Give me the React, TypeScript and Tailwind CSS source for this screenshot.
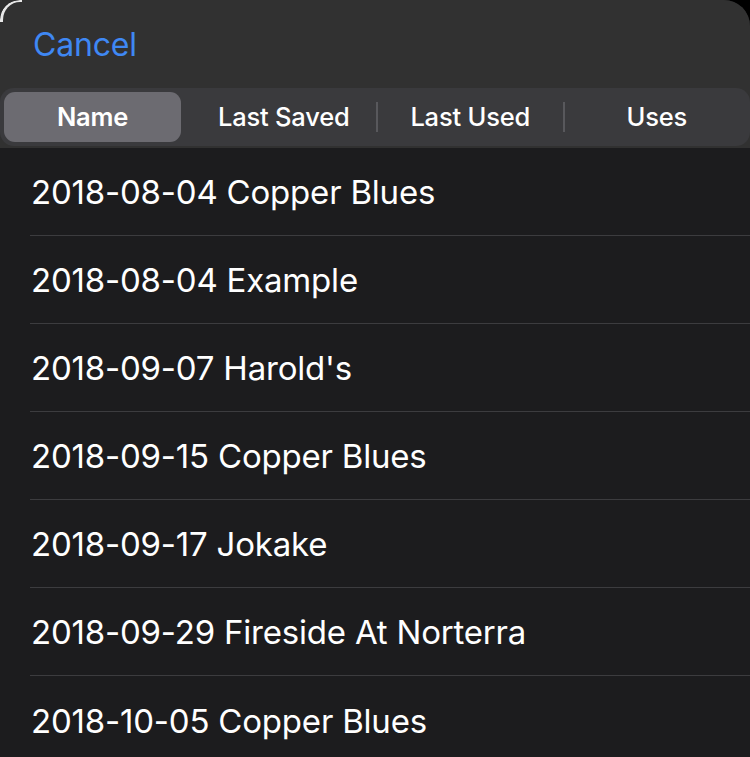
import React from "react";

const sorts = ["Name", "Last Saved", "Last Used", "Uses"];

const setlists = [
  "2018-08-04 Copper Blues",
  "2018-08-04 Example",
  "2018-09-07 Harold's",
  "2018-09-15 Copper Blues",
  "2018-09-17 Jokake",
  "2018-09-29 Fireside At Norterra",
  "2018-10-05 Copper Blues",
];

export default function App() {
  return (
    <div
      className="relative w-[750px] h-[757px] overflow-hidden bg-black"
      style={{ fontFamily: "Inter, 'Noto Sans', sans-serif" }}
    >
      <div className="absolute left-0 top-0 w-[30px] h-[30px] bg-[#2e2e2e]" />
      <div className="relative h-full flex flex-col rounded-tl-[20px] rounded-tr-[26px] overflow-hidden bg-[#1c1c1e]">
        <div className="absolute left-0 top-0 w-[22px] h-[22px] rounded-tl-[20px] border-t-[2px] border-l-[3px] border-[#e8e8e8] pointer-events-none z-10" />
        <div className="bg-[#313131] flex flex-col">
          <div className="h-[88px] flex items-center pl-[33px]">
            <span className="text-[32px] leading-none text-[#3f88f4] tracking-[-0.2px] pt-[2px]">
              Cancel
            </span>
          </div>
          <div className="pb-[2px]">
            <div className="h-[58px] bg-[#3a3a3d] rounded-[14px] py-[4px] pl-[4px] flex">
              {sorts.map((s, i) => (
                <div key={s} className="flex-1 flex items-center relative">
                  {i > 1 && (
                    <span className="absolute left-[-1px] top-[10px] h-[30px] w-[2px] bg-[#58585c]" />
                  )}
                  <div
                    className={
                      i === 0
                        ? "w-[177px] h-full rounded-[11px] bg-[#6c6b71] flex items-center justify-center"
                        : "w-full h-full flex items-center justify-center"
                    }
                  >
                    <span
                      className={
                        i === 0
                          ? "text-[25.5px] font-semibold text-white tracking-[-0.2px]"
                          : "text-[25.5px] font-medium text-white tracking-[-0.2px]"
                      }
                    >
                      {s}
                    </span>
                  </div>
                </div>
              ))}
            </div>
          </div>
        </div>
        <div className="flex flex-col">
          {setlists.map((name, i) => (
            <div key={i} className="pl-[30px]">
              <div
                className={
                  i < setlists.length - 1
                    ? "h-[88px] flex items-center border-b border-[#3c3c3f] pl-[1px]"
                    : "h-[88px] flex items-center pl-[1px]"
                }
              >
                <span className="text-[33px] text-white tracking-[-0.2px] leading-none pt-[2px]">
                  {name}
                </span>
              </div>
            </div>
          ))}
        </div>
      </div>
    </div>
  );
}
